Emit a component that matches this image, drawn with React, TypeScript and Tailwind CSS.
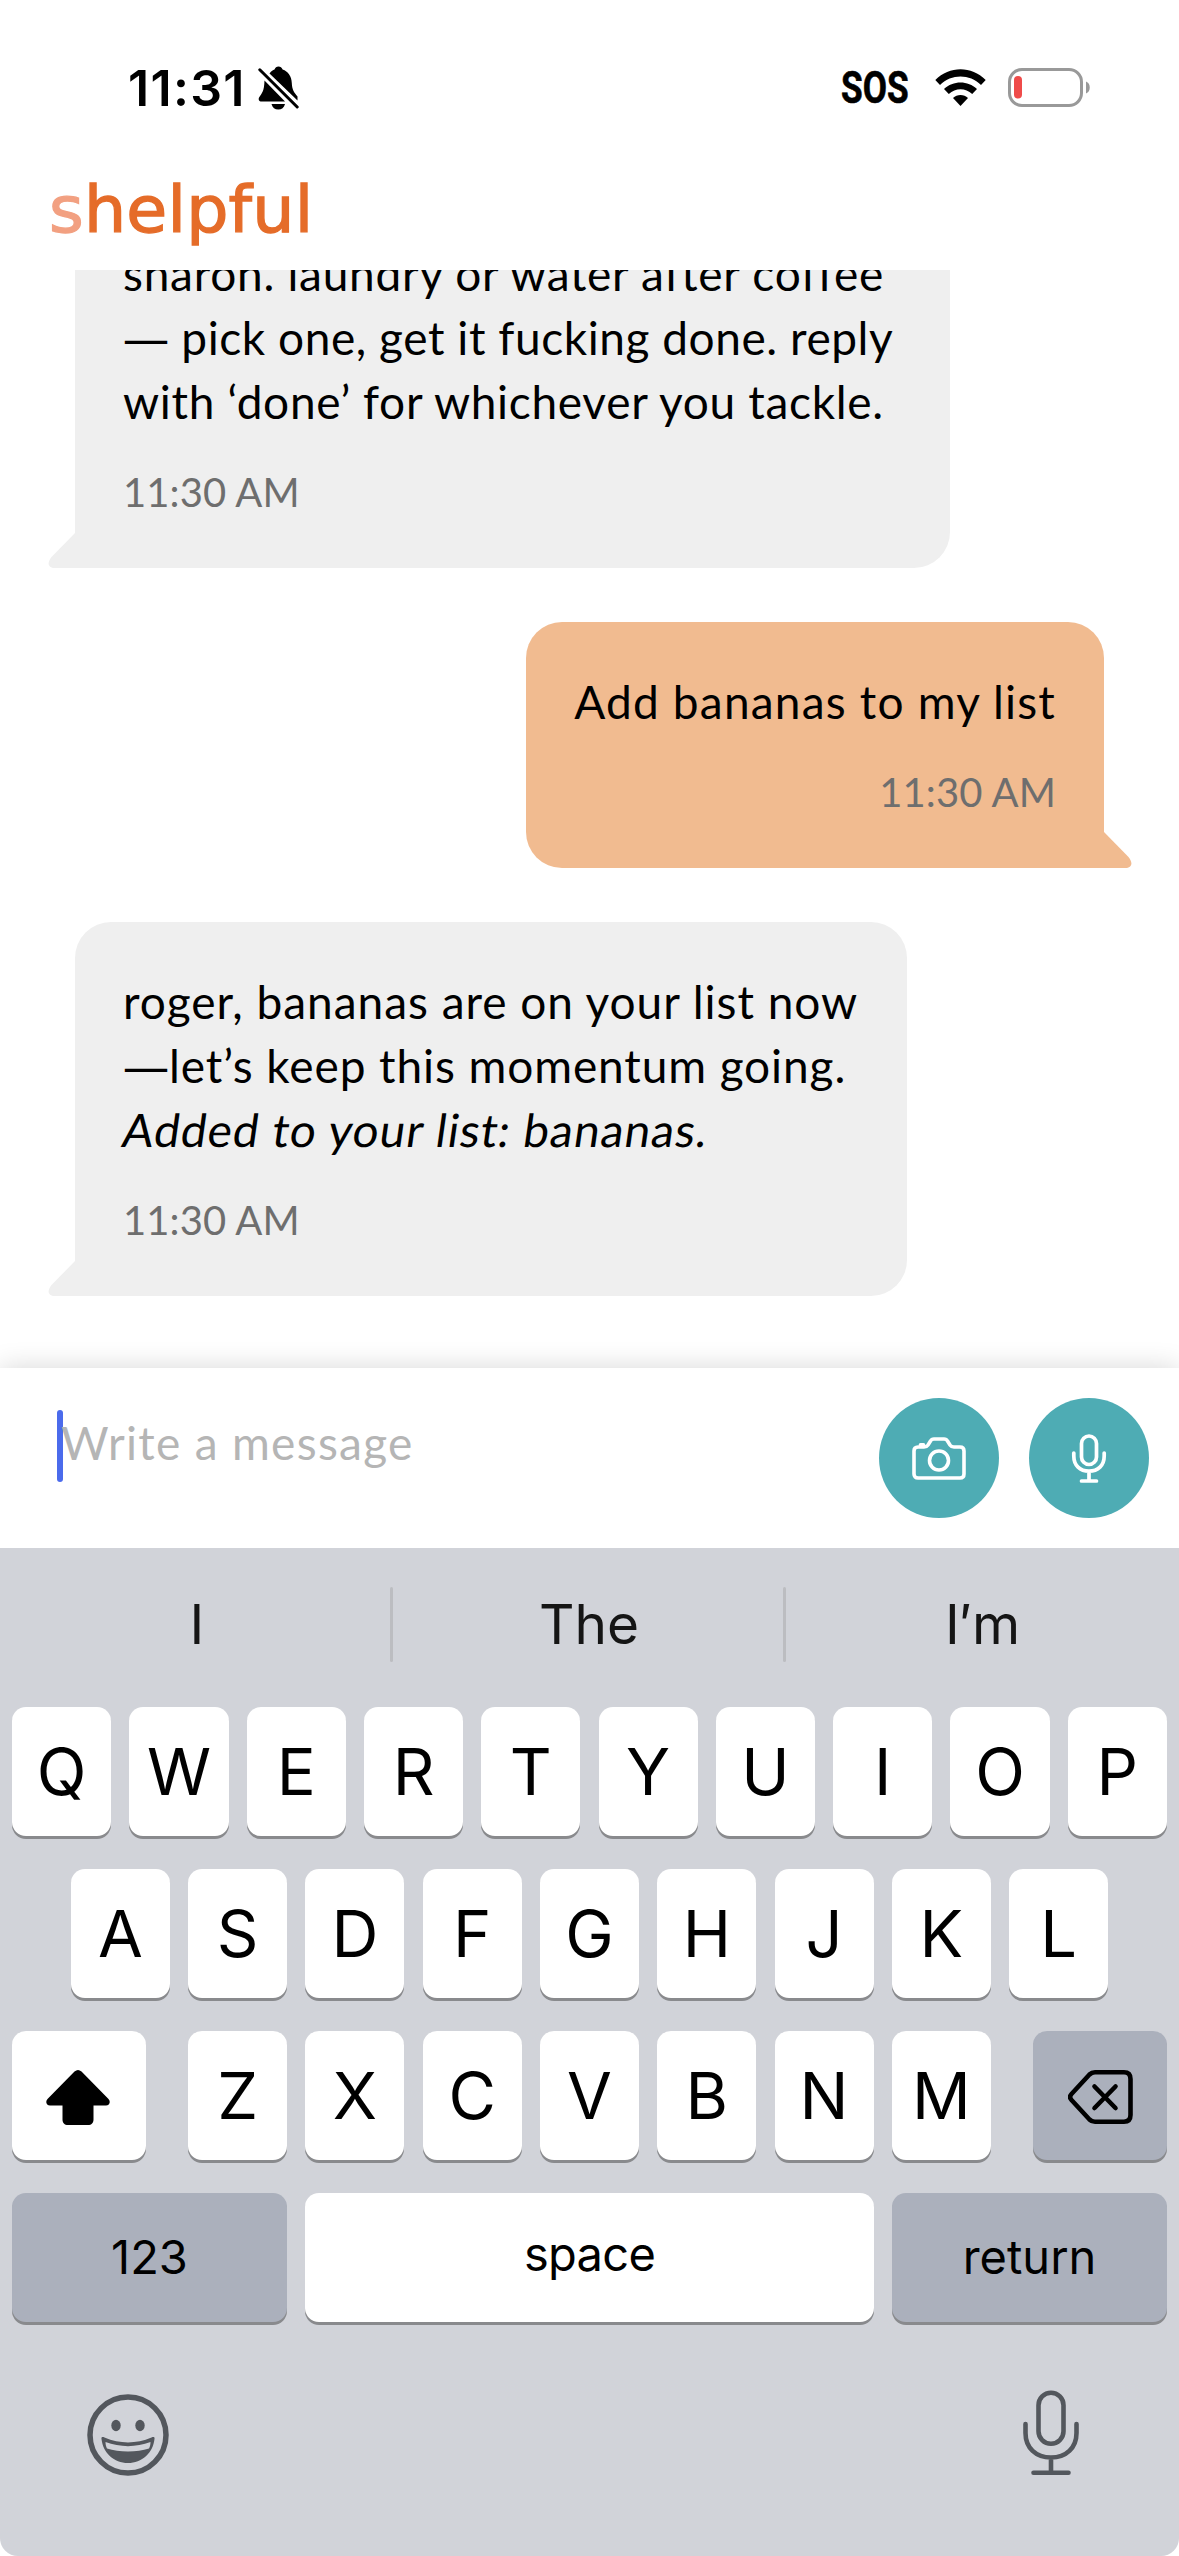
import type { ReactNode } from 'react';
import clsx from 'clsx';

type Line = { text: string; dash?: boolean; className?: string };

function StatusBar() {
  return (
    <div className="flex h-[174px] items-start justify-between pl-[128px] pr-[88px] pt-[60px]">
      <div className="flex items-center">
        <span className="w-[130px] whitespace-nowrap font-['Inter',sans-serif] text-[50px] font-semibold leading-[56px] tracking-[1.3px]">
          11:31
        </span>
        <svg width="41" height="44" viewBox="0 0 41 44" fill="none">
          <path
            d="M11.5 7.5 C13.5 5 15 4.2 16.5 3.6 C17.3 1.4 18.5 0.5 20.5 0.5 C22.5 0.5 23.8 1.4 24.6 3.6 C30 5.5 33.6 10.5 33.8 17 C34 23.5 36 26.5 39.5 30.5 V34.5 Z"
            fill="#000"
          />
          <path
            d="M6.5 14.5 L27 35.5 H3.6 C1 35.5 0 33.3 1.2 31.2 C3.5 27.6 6.2 26 6.5 14.5 Z"
            fill="#000"
          />
          <path d="M13.5 38 H27 C26 41.6 23.7 43.6 20.3 43.6 C16.8 43.6 14.5 41.6 13.5 38 Z" fill="#000" />
          <path d="M1.8 3.8 L39.2 41" stroke="#fff" strokeWidth="7" />
          <path d="M1.8 3.8 L39.2 41" stroke="#000" strokeWidth="3" strokeLinecap="round" />
        </svg>
      </div>

      <div className="flex h-[56px] items-center">
        <span className="mr-[27px] w-[67px] whitespace-nowrap font-['Roboto',sans-serif] text-[44px] font-bold leading-[56px] [-webkit-text-stroke:0.6px_#000]">
          <span className="inline-block origin-left scale-x-[0.8]">SOS</span>
        </span>
        <svg width="51" height="38" viewBox="0 0 51 38" className="mr-[22px]">
          <path d="M0.3 11 C14.5 -3.2 36.5 -3.2 50.7 11 L46 16 C34.5 4.8 16.5 4.8 5 16 Z" />
          <path d="M9 20 C18 11.2 33 11.2 42 20 L37.2 25 C30.5 18.6 20.5 18.6 13.8 25 Z" />
          <path d="M18 29 C22 25 29 25 33 29 L25.5 37 Z" />
        </svg>
        <svg width="83" height="40" viewBox="0 0 83 40" fill="none">
          <rect x="1.5" y="1.5" width="72" height="36" rx="12.5" stroke="#999" strokeWidth="3" />
          <rect x="6" y="8" width="8" height="22.5" rx="4" fill="#ef4b4a" />
          <path d="M78 13.5 C83 15 83 24 78 25.5 Z" fill="#999" />
        </svg>
      </div>
    </div>
  );
}

function Logo() {
  return (
    <div className="h-[96px] pl-[49px]">
      <div className="-mt-[2px] flex origin-left scale-x-[1.04] font-['DejaVu_Sans',sans-serif] text-[64px] leading-[76px] tracking-[0.2px] text-[#e56c29] [-webkit-text-stroke:1.3px_#e56c29]">
        <span className="text-[#f2a081] [-webkit-text-stroke:1.3px_#f2a081]">s</span>
        <span>helpful</span>
      </div>
    </div>
  );
}

function Bubble({ lines, time, mine, className }: { lines: Line[]; time: string; mine?: boolean; className?: string }) {
  return (
    <div
      className={clsx(
        'relative rounded-[36px] px-[48px] pt-[48px]',
        mine ? 'self-end rounded-br-none bg-[#f1bb90] text-right' : 'rounded-bl-none bg-[#efefef]',
        className
      )}
    >
      {lines.map((line) => (
        <p key={line.text} className={clsx('h-[64px] whitespace-nowrap text-[46px] leading-[64px]', line.className)}>
          {line.dash && <span className="font-['Open_Sans',sans-serif] leading-none tracking-normal">—</span>}
          {line.text}
        </p>
      ))}
      <p className="mt-[34px] text-[40px] leading-[48px] tracking-[0.1px] text-[#6e6e6e]">{time}</p>
      <svg
        width="28"
        height="36"
        viewBox="0 0 28 36"
        className={clsx('absolute bottom-0', mine ? '-right-[27.5px] -scale-x-100 fill-[#f1bb90]' : '-left-[27.5px] fill-[#efefef]')}
      >
        <path d="M28 0 L3.5 25 C-1 30.5 -0.5 36 7 36 H28 Z" />
      </svg>
    </div>
  );
}

function Key({ children, dark, className }: { children: ReactNode; dark?: boolean; className?: string }) {
  return (
    <button
      className={clsx(
        'flex h-[129px] items-center justify-center rounded-[14px] shadow-[0_3px_0_#898a8d]',
        dark ? 'bg-[#abb0bc]' : 'bg-white',
        className
      )}
    >
      {children}
    </button>
  );
}

function Letters({ letters }: { letters: string }) {
  return (
    <div className="flex gap-[18.2px]">
      {letters.split('').map((letter) => (
        <Key key={letter} className="w-[99.12px] pb-[1px] text-[65px] leading-none">
          {letter}
        </Key>
      ))}
    </div>
  );
}

function Keyboard() {
  return (
    <div className="relative h-[1008px] bg-white">
      <div className="h-full rounded-b-[18px] bg-[#d1d3d9] font-['Inter',sans-serif]">
        <div className="flex h-[159px] items-center pb-[7px] text-[55px] text-[#151515]">
          <div className="w-[390px] pl-[4px] pt-[1px] text-center">I</div>
          <div className="h-[75px] w-[3px] rounded bg-[#bcbdc1]" />
          <div className="w-[390px] pl-[2px] pt-[1px] text-center">The</div>
          <div className="h-[75px] w-[3px] rounded bg-[#bcbdc1]" />
          <div className="flex-1 pt-[1px] text-center">I′m</div>
        </div>

        <div className="flex flex-col gap-[33px] px-[12px]">
          <div className="flex justify-center">
            <Letters letters="QWERTYUIOP" />
          </div>
          <div className="flex justify-center">
            <Letters letters="ASDFGHJKL" />
          </div>
          <div className="flex justify-between">
            <Key className="w-[134px] pr-[2px]">
              <svg width="64" height="55" viewBox="0 0 64 55" className="mt-[3px]">
                <path d="M28.5 1.5 C31 -0.5 33 -0.5 35.5 1.5 L62.500 29 C65 32 63.500 35.500 60 35.500 H47.500 V49.500 C47.500 53 45.500 55 42 55 H22 C18.500 55 16.500 53 16.500 49.500 V35.500 H4 C0.500 35.500 -1 32 1.500 29 Z" />
              </svg>
            </Key>
            <Letters letters="ZXCVBNM" />
            <Key dark className="w-[134px] pl-[2px]">
              <svg
                width="66"
                height="56"
                viewBox="0 0 66 56"
                className="mt-[3px]"
                fill="none"
                stroke="#000"
                strokeWidth="4.6"
                strokeLinecap="round"
                strokeLinejoin="round"
              >
                <path d="M27 3.3 H56 C60.5 3.3 62.5 5.5 62.5 10 V46 C62.5 50.5 60.5 52.7 56 52.7 H27 C24.5 52.7 23 52 21.5 50.5 L3.5 31 C1.6 29 1.6 27 3.5 25 L21.5 5.5 C23 4 24.5 3.3 27 3.3 Z" />
                <path d="M26.5 17.5 L47.5 39 M47.5 17.5 L26.5 39" />
              </svg>
            </Key>
          </div>
          <div className="flex gap-[18px] text-[47px]">
            <Key dark className="w-[275px]">123</Key>
            <Key className="flex-1 pb-[6px] tracking-[-0.7px]">space</Key>
            <Key dark className="w-[275px]">return</Key>
          </div>
        </div>

        <div className="flex items-center justify-between px-[87px] pt-[67px]">
          <svg width="82" height="82" viewBox="0 0 82 82" fill="none" className="mt-[5px]">
            <circle cx="41" cy="41" r="38" stroke="#53575d" strokeWidth="5.5" />
            <ellipse cx="29" cy="31.5" rx="4.7" ry="5.7" fill="#53575d" />
            <ellipse cx="53" cy="31.5" rx="4.7" ry="5.7" fill="#53575d" />
            <path
              d="M14.5 45 C14 43 15.5 42.5 17.5 43.5 C33 50 49 50 64.5 43.5 C66.5 42.5 68 43 67.5 45 C66 59 55 69 41 69 C27 69 16 59 14.5 45 Z"
              fill="#53575d"
            />
            <path
              d="M18.5 48 C33 53.5 49 53.5 63.5 48 C63.5 50.5 63 52.5 62 54.5 C50 58.5 32 58.5 20 54.5 C19 52.5 18.5 50.5 18.5 48 Z"
              fill="#d1d3d9"
            />
          </svg>
          <svg
            width="58"
            height="86"
            viewBox="0 0 58 86"
            className="mr-[12px]"
            fill="none"
            stroke="#53575d"
            strokeWidth="4.6"
            strokeLinecap="round"
          >
            <rect x="16.5" y="2.8" width="25" height="51" rx="12.5" />
            <path d="M3.5 34 V43 C3.5 58 14 67.5 29 67.5 C44 67.5 54.5 58 54.5 43 V34 M29 68 V82 M11.5 82.7 H46.5" />
          </svg>
        </div>
      </div>
    </div>
  );
}

export default function App() {
  return (
    <div className="flex h-[2556px] w-[1179px] flex-col overflow-hidden bg-white text-black">
      <StatusBar />
      <Logo />

      <main className="flex h-[1098px] flex-col items-start gap-[54px] overflow-hidden px-[75px] font-['Lato',sans-serif]">
        <Bubble
          className="-mt-[76px] h-[374px] w-[875px] shrink-0"
          time="11:30 AM"
          lines={[
            { text: 'sharon. laundry or water after coffee', className: 'tracking-[0.73px]' },
            { text: ' pick one, get it fucking done. reply', dash: true, className: 'tracking-[0.56px]' },
            { text: 'with ‘done’ for whichever you tackle.', className: 'tracking-[0.7px]' },
          ]}
        />
        <Bubble
          mine
          className="h-[246px] w-[578px] shrink-0"
          time="11:30 AM"
          lines={[{ text: 'Add bananas to my list', className: 'tracking-[1.2px]' }]}
        />
        <Bubble
          className="h-[374px] w-[832px] shrink-0"
          time="11:30 AM"
          lines={[
            { text: 'roger, bananas are on your list now', className: 'tracking-[0.97px]' },
            { text: 'let’s keep this momentum going.', dash: true, className: 'tracking-[0.9px]' },
            { text: 'Added to your list: bananas.', className: '-skew-x-8 tracking-[1px]' },
          ]}
        />
      </main>

      <div className="relative flex h-[180px] items-start justify-between bg-white pl-[57px] pr-[30px] pt-[30px] shadow-[0_0_26px_rgba(0,0,0,0.16)]">
        <div className="mt-[12px] flex h-[72px]">
          <div className="h-[72px] w-[6px] rounded-full bg-[#4b6bec]" />
          <span className="-ml-[2px] mt-[1px] whitespace-nowrap font-['Lato',sans-serif] text-[46px] leading-[64px] tracking-[1.3px] text-[#b5b5b5]">
            Write a message
          </span>
        </div>
        <div className="flex gap-[30px]">
          <button className="flex size-[120px] items-center justify-center rounded-full bg-[#4eacb4]">
            <svg
              width="54"
              height="43"
              viewBox="0 0 54 43"
              fill="none"
              stroke="#fff"
              strokeWidth="3.6"
              strokeLinejoin="round"
              strokeLinecap="round"
            >
              <path d="M6 10 H12 C14 10 15 9.5 16 8 L18.5 4 C19.3 2.5 20.5 2 22 2 H32 C33.5 2 34.7 2.5 35.5 4 L38 8 C39 9.5 40 10 42 10 H48 C50.8 10 52 11.5 52 14 V37 C52 39.5 50.5 41 48 41 H6 C3.5 41 2 39.5 2 37 V14 C2 11.5 3.2 10 6 10 Z" />
              <path d="M8.5 7.8 H11.5" />
              <circle cx="27" cy="23.5" r="9.5" />
            </svg>
          </button>
          <button className="flex size-[120px] items-center justify-center rounded-full bg-[#4eacb4]">
            <svg width="36" height="49" viewBox="0 0 36 49" fill="none" stroke="#fff" strokeWidth="3.7" strokeLinecap="round">
              <rect x="10.5" y="2" width="15" height="28.5" rx="7.5" />
              <path d="M2.8 19 V22 C2.8 31.5 9 37.2 18 37.2 C27 37.2 33.2 31.5 33.2 22 V19 M18 37.5 V46 M10.5 47 H25.5" />
            </svg>
          </button>
        </div>
      </div>

      <Keyboard />
    </div>
  );
}
